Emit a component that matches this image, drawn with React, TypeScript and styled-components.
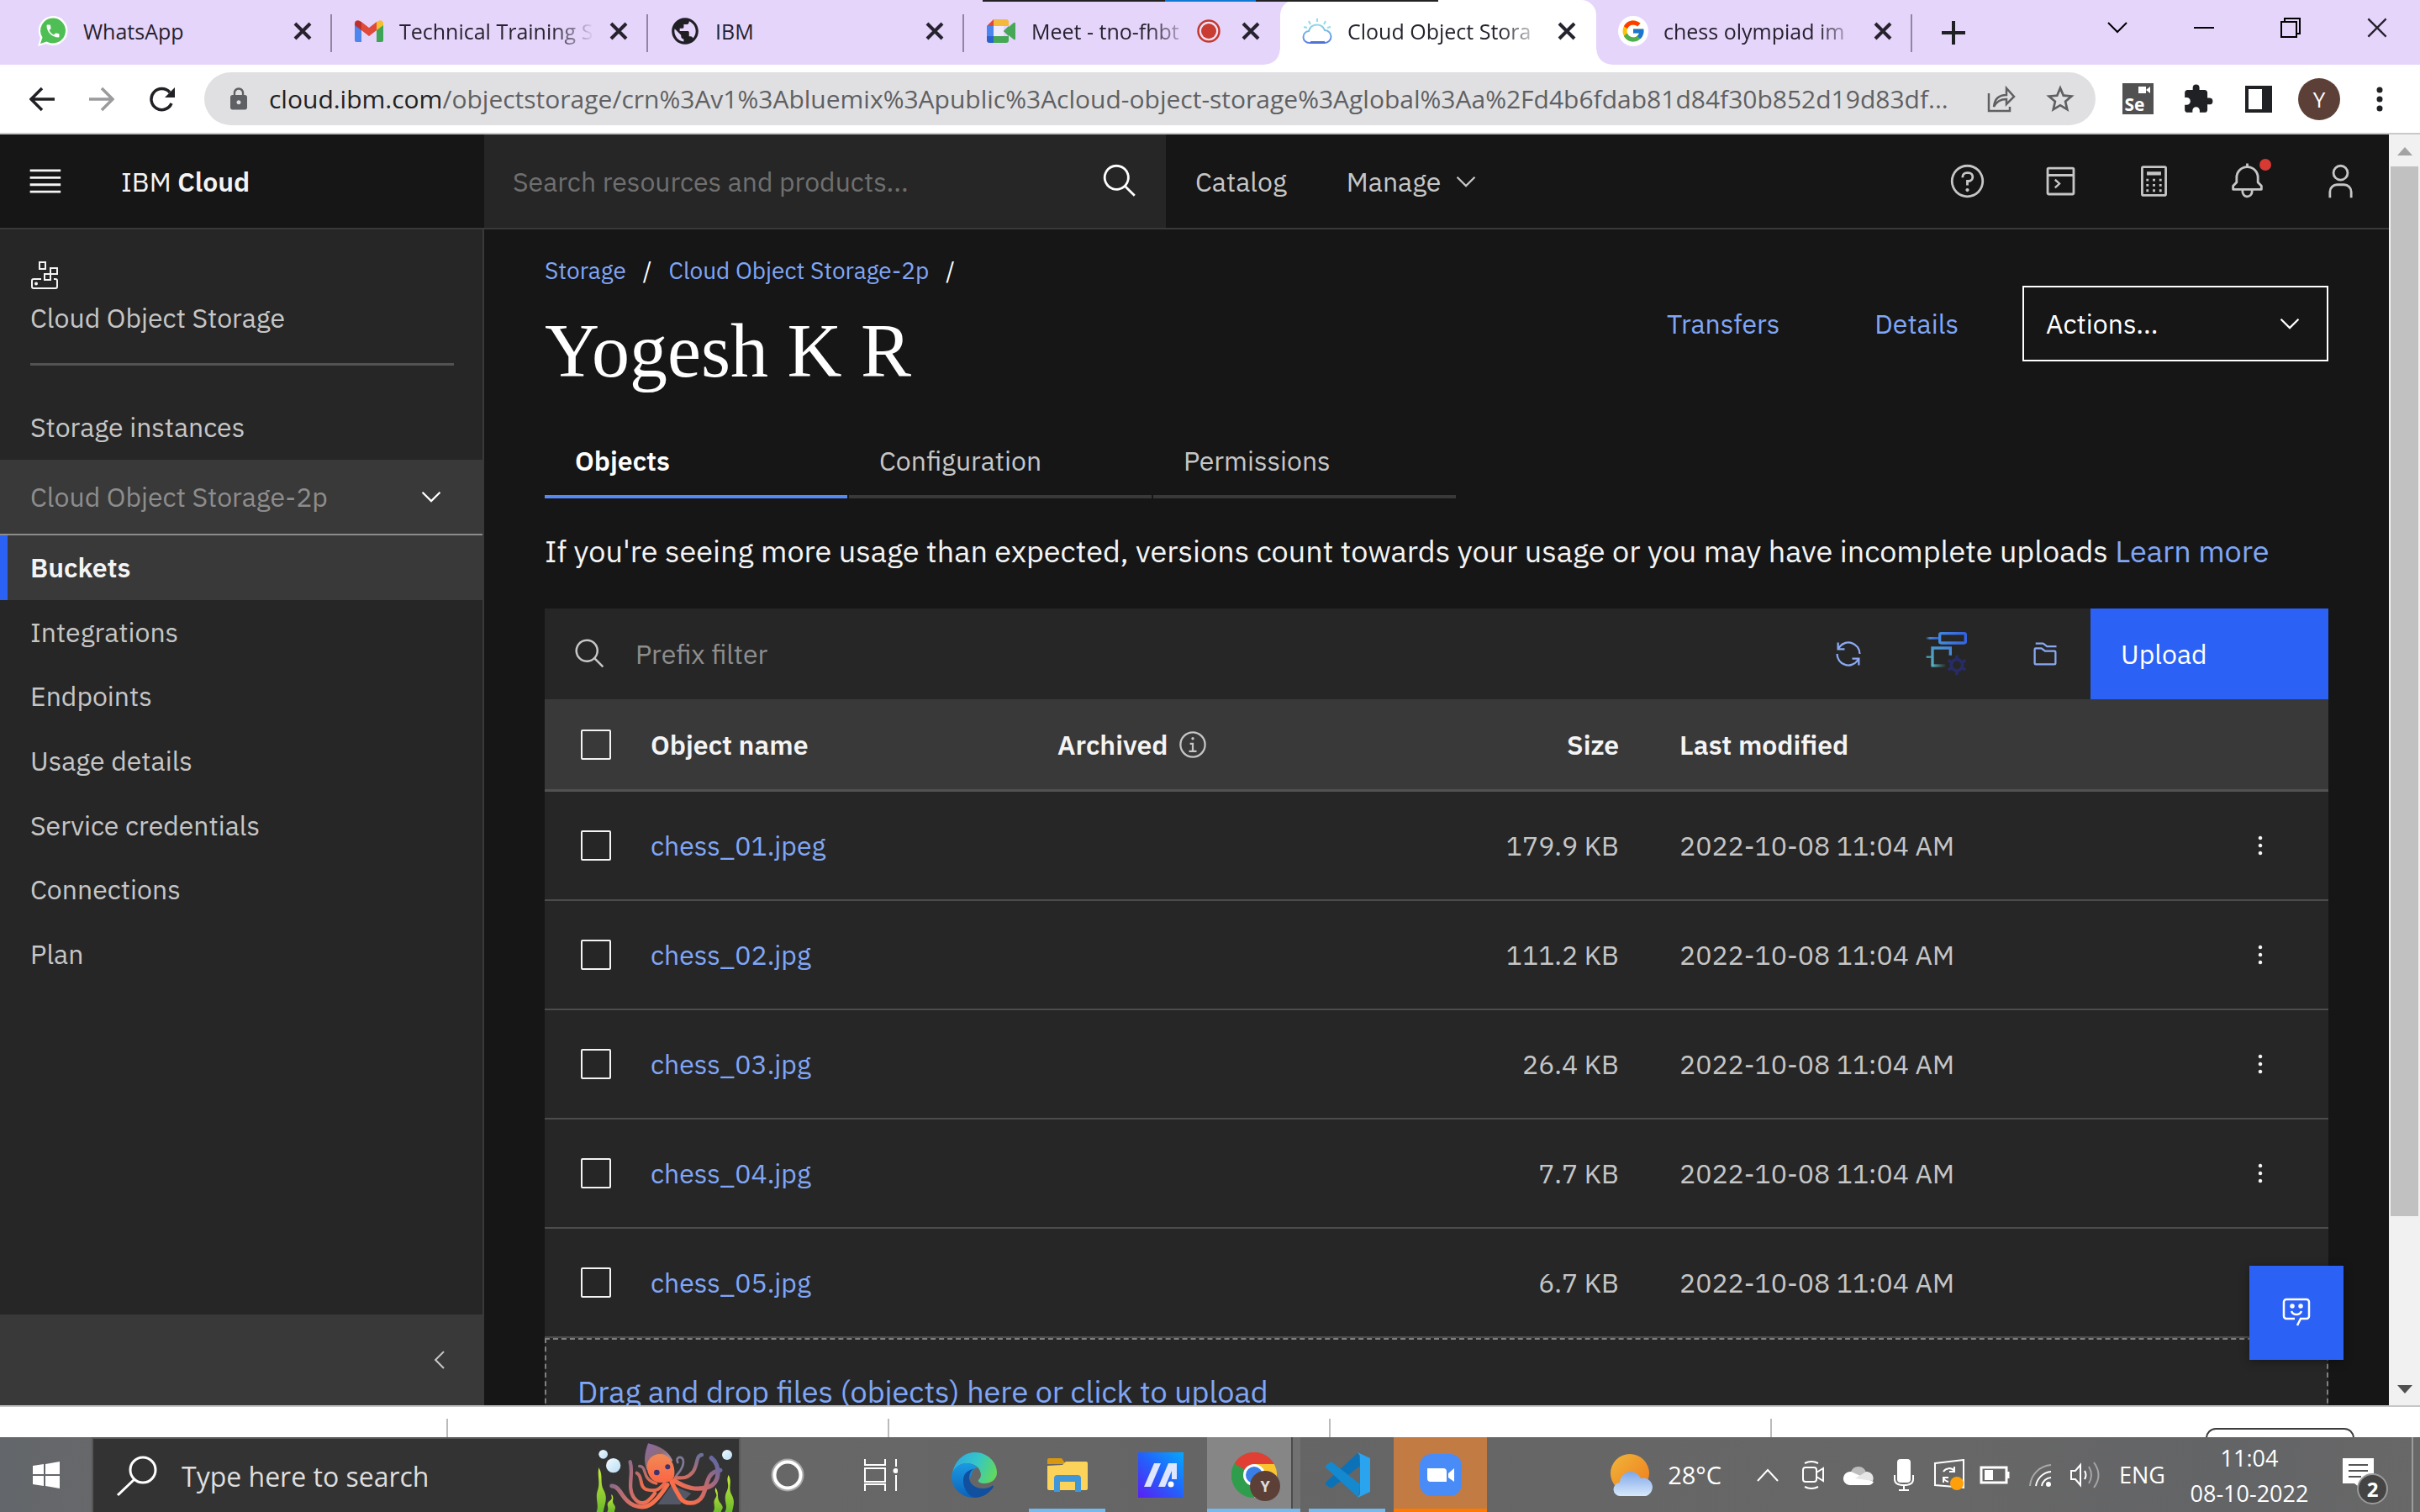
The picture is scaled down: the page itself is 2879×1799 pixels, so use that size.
import React from 'react';
import styled, { createGlobalStyle, css } from 'styled-components';
import { MdPublic, MdExtension, MdLock, MdStarBorder, MdPhone } from 'react-icons/md';
import { FcGoogle } from 'react-icons/fc';

const plex = `"IBM Plex Sans", Roboto, "Liberation Sans", sans-serif`;
const segoe = `"Segoe UI", "Open Sans", "Noto Sans", sans-serif`;

const c = {
  bg: '#161616',
  layer: '#262626',
  layer2: '#393939',
  line: '#4c4c4c',
  text: '#f4f4f4',
  text2: '#c6c6c6',
  muted: '#8d8d8d',
  link: '#80a6f6',
  blue: '#2c61f5',
};

const Global = createGlobalStyle`
  *, *::before, *::after { box-sizing: border-box; }
  body { margin: 0; background: #fff; overflow: hidden; }
  button, input, select { font: inherit; color: inherit; margin: 0; border: 0; padding: 0; background: none; outline: none; border-radius: 0; }
  a { color: inherit; text-decoration: none; }
  b { font-weight: 600; }
  svg { display: block; flex: none; }
  ul, ol { list-style: none; margin: 0; padding: 0; }
`;

const Screen = styled.div`
  height: 100vh;
  display: flex;
  flex-direction: column;
  overflow: hidden;
`;

/* ---------- Browser chrome ---------- */

const TabStrip = styled.div`
  position: relative;
  flex: none;
  display: flex;
  height: 77px;
  padding-left: 19px;
  background: #e5d5fb;
  color: #26222e;
  font: 25px/36px ${segoe};
`;
const ShareLine = styled.div`
  position: absolute;
  top: 0;
  left: 1169px;
  z-index: 2;
  display: flex;
  justify-content: center;
  width: 542px;
  height: 2px;
  background: #222;
  &::after { content: ''; width: 108px; background: #0f78d4; }
`;
const TabItem = styled.div<{ $active?: boolean; $divider?: boolean }>`
  position: relative;
  flex: none;
  display: flex;
  align-items: center;
  width: 376px;
  height: 77px;
  padding: 0 24px 3px 26px;
  ${p => p.$divider && css`
    &::after { content: ''; position: absolute; right: 0; top: 17px; width: 2px; height: 45px; background: #91869f; }
  `}
  ${p => p.$active && css`
    background: #fff;
    border-radius: 18px 18px 0 0;
    &::before, &::after {
      content: ''; position: absolute; bottom: 0; width: 18px; height: 18px;
    }
    &::before { left: -18px; background: radial-gradient(circle at 0 0, transparent 17px, #fff 18px); }
    &::after { right: -18px; background: radial-gradient(circle at 100% 0, transparent 17px, #fff 18px); }
  `}
`;
const Favicon = styled.span`
  display: flex;
  justify-content: center;
  flex: none;
  width: 36px;
  margin-right: 18px;
`;
const TabTitle = styled.span<{ $fade?: boolean }>`
  flex: 1;
  min-width: 0;
  white-space: nowrap;
  ${p => p.$fade && css`mask-image: linear-gradient(90deg, #000 calc(100% - 50px), transparent);`}
`;
const PlainButton = styled.button`
  display: flex;
  align-items: center;
  justify-content: center;
  flex: none;
`;
const Recording = styled.span`
  margin: 0 7px;
`;
const TabClose = styled(PlainButton)`
  width: 22px;
  height: 36px;
  margin-left: 18px;
`;
const NewTab = styled(PlainButton)`
  width: 98px;
`;
const WindowButtons = styled.div`
  display: flex;
  margin-left: auto;
  height: 66px;
`;
const WindowButton = styled(PlainButton)`
  width: 103px;
`;

const AddressRow = styled.div`
  flex: none;
  display: flex;
  align-items: center;
  height: 83px;
  border-bottom: 2px solid #c9c9c9;
  background: #fff;
  color: #202124;
`;
const NavButtons = styled.div`
  display: flex;
  padding: 0 16px 0 14px;
`;
const NavButton = styled(PlainButton)`
  width: 71px;
  height: 63px;
`;
const Omnibox = styled.label`
  flex: 1;
  min-width: 0;
  display: flex;
  align-items: center;
  height: 63px;
  padding: 0 22px 0 26px;
  border-radius: 32px;
  background: #e0e0e2;
  color: #5f6063;
  font: 30px/44px ${segoe};
`;
const Host = styled.span`
  margin-left: 21px;
  color: #202124;
`;
const UrlInput = styled.input`
  flex: 1;
  min-width: 0;
`;
const OmniButton = styled(PlainButton)`
  width: 40px;
  margin-left: 30px;
`;
const Extensions = styled.div`
  display: flex;
  align-items: center;
  padding: 0 12px 0 14px;
`;
const ExtButton = styled(PlainButton)`
  width: 72px;
  height: 63px;
`;
const SeBadge = styled.span`
  display: flex;
  flex-direction: column;
  align-items: flex-start;
  justify-content: flex-end;
  position: relative;
  width: 37px;
  height: 37px;
  padding-left: 3px;
  background: #515151;
  color: #fff;
  font: 700 21px/23px ${segoe};
`;
const SeCamera = styled.svg`
  position: absolute;
  top: 4px;
  right: 4px;
`;
const Avatar = styled.span`
  display: grid;
  place-items: center;
  width: 50px;
  height: 50px;
  border-radius: 50%;
  background: #5c4037;
  color: #fff;
  font: 26px/30px ${segoe};
`;

/* ---------- Web page ---------- */

const Viewport = styled.div`
  flex: 1;
  min-height: 0;
  display: flex;
  border-bottom: 2px solid #c6c6c6;
`;
const Page = styled.div`
  flex: 1;
  min-width: 0;
  display: flex;
  flex-direction: column;
  background: ${c.bg};
  color: ${c.text2};
  font: 32px/44px ${plex};
`;
const Scrollbar = styled.div`
  flex: none;
  display: flex;
  flex-direction: column;
  align-items: center;
  width: 37px;
  padding: 15px 2px 14px;
  background: #f1f1f1;
`;
const Thumb = styled.div`
  width: 33px;
  height: 1249px;
  margin: 13px 0 auto;
  background: #c1c1c1;
`;

const Header = styled.header`
  flex: none;
  display: flex;
  height: 113px;
  border-bottom: 2px solid ${c.layer2};
`;
const Brand = styled.div`
  display: flex;
  align-items: center;
  gap: 69px;
  width: 576px;
  padding-left: 30px;
  color: ${c.text};
`;
const HeaderSearch = styled.label`
  display: flex;
  align-items: center;
  justify-content: space-between;
  width: 811px;
  padding: 0 32px 0 34px;
  background: ${c.layer};
  color: #fff;
`;
const TextInput = styled.input<{ $ph: string }>`
  flex: 1;
  min-width: 0;
  &::placeholder { color: ${p => p.$ph}; opacity: 1; }
`;
const HeaderNav = styled.nav`
  display: flex;
  align-items: center;
  gap: 71px;
  padding-left: 35px;
`;
const MenuButton = styled(PlainButton)`
  gap: 12px;
`;
const HeaderIcons = styled.div`
  display: flex;
  margin-left: auto;
  padding-right: 2px;
`;
const HeaderIcon = styled(PlainButton)`
  position: relative;
  width: 111px;
`;
const AlertDot = styled.span`
  position: absolute;
  top: 29px;
  right: 27px;
  width: 14px;
  height: 14px;
  border-radius: 50%;
  background: #d63a33;
`;

const Body = styled.div`
  flex: 1;
  min-height: 0;
  display: flex;
`;
const Sidebar = styled.aside`
  flex: none;
  display: flex;
  flex-direction: column;
  width: 576px;
  border-right: 2px solid ${c.layer2};
  background: ${c.layer};
`;
const Service = styled.div`
  display: flex;
  flex-direction: column;
  gap: 12px;
  margin: 0 34px 0 36px;
  padding: 37px 0 32px;
  border-bottom: 3px solid #525252;
`;
const SideHeading = styled.div`
  padding: 51px 36px 17px;
`;
const Instance = styled.label`
  position: relative;
  display: flex;
  align-items: center;
  height: 90px;
  padding: 0 43px 0 36px;
  border-bottom: 2px solid ${c.muted};
  background: ${c.layer2};
  color: #fff;
`;
const Select = styled.select`
  flex: 1;
  min-width: 0;
  appearance: none;
`;
const InstanceSelect = styled(Select)`
  color: ${c.muted};
`;
const SideList = styled.ul`
  display: grid;
  grid-auto-rows: 1fr;
  height: 536px;
`;
const SideLink = styled.a<{ $active?: boolean }>`
  display: flex;
  align-items: center;
  height: 100%;
  padding-left: 36px;
  ${p => p.$active && css`
    background: ${c.layer2};
    box-shadow: inset 9px 0 ${c.blue};
    color: ${c.text};
    font-weight: 600;
  `}
`;
const Collapse = styled.button`
  display: flex;
  align-items: center;
  justify-content: flex-end;
  height: 108px;
  margin-top: auto;
  padding-right: 34px;
  background: ${c.layer2};
  color: ${c.text2};
`;

const Main = styled.main`
  flex: 1;
  min-width: 0;
  padding: 27px 72px 0;
  overflow: hidden;
`;
const TitleRow = styled.div`
  display: flex;
  justify-content: space-between;
`;
const Crumbs = styled.ol`
  display: flex;
  gap: 20px;
  color: #fff;
  font-size: 28px;
`;
const Link = styled.a`
  color: ${c.link};
`;
const Title = styled.h1`
  margin: 22px 0 0;
  color: #fff;
  font: 90px/104px "Liberation Serif", serif;
`;
const PageActions = styled.div`
  display: flex;
  align-items: center;
  gap: 113px;
  height: 90px;
  margin-top: 40px;
`;
const ActionSelect = styled.label`
  display: flex;
  align-items: center;
  width: 364px;
  height: 90px;
  margin-left: -37px;
  padding: 0 26px;
  border: 2px solid #fff;
  color: #fff;
`;
const Tabs = styled.div`
  display: flex;
  gap: 2px;
  margin-top: 37px;
`;
const Tab = styled.button<{ $active?: boolean }>`
  width: 360px;
  height: 86px;
  padding: 0 36px;
  border-bottom: 4px solid ${p => (p.$active ? '#5589f4' : c.layer2)};
  color: ${p => (p.$active ? '#fff' : c.text2)};
  font-weight: ${p => (p.$active ? 600 : 400)};
  text-align: left;
`;
const Notice = styled.p`
  margin: 39px 0 44px;
  color: ${c.text};
  font-size: 36px;
  line-height: 48px;
  white-space: nowrap;
`;
const Toolbar = styled.div`
  display: flex;
  align-items: center;
  height: 108px;
  background: ${c.layer};
`;
const FilterBox = styled.label`
  flex: 1;
  display: flex;
  align-items: center;
  gap: 34px;
  padding-left: 34px;
`;
const ToolButtons = styled.div`
  display: flex;
  gap: 9px;
  color: #8aa9f2;
`;
const ToolButton = styled(PlainButton)`
  width: 108px;
  height: 108px;
`;
const Upload = styled.button`
  width: 283px;
  height: 108px;
  padding-left: 36px;
  background: ${c.blue};
  color: #fff;
  text-align: left;
`;

const Table = styled.table`
  width: 100%;
  table-layout: fixed;
  border-collapse: separate;
  border-spacing: 0;
`;
const Col = styled.col<{ $w: string }>`
  width: ${p => p.$w};
`;
const Th = styled.th<{ $right?: boolean }>`
  height: 110px;
  padding: 0 36px;
  border-bottom: 3px solid #525252;
  background: ${c.layer2};
  color: ${c.text};
  font-weight: 600;
  text-align: ${p => (p.$right ? 'right' : 'left')};
`;
const Td = styled.td<{ $right?: boolean }>`
  height: 130px;
  padding: 0 36px;
  border-bottom: 2px solid ${c.line};
  background: ${c.layer};
  text-align: ${p => (p.$right ? 'right' : 'left')};
`;
const Check = styled.input`
  display: block;
  appearance: none;
  width: 36px;
  height: 36px;
  margin-left: 7px;
  border: 2px solid #f4f4f4;
  border-radius: 2px;
  &:checked { background: #f4f4f4; }
`;
const HeadLabel = styled.span`
  display: flex;
  align-items: center;
  gap: 11px;
`;
const InfoIcon = styled.span`
  color: ${c.text2};
`;
const RowMenu = styled(PlainButton)`
  width: 90px;
  height: 90px;
  color: #f4f4f4;
`;
const DropZone = styled.button`
  display: flex;
  align-items: flex-start;
  width: 100%;
  height: 160px;
  padding: 40px 37px;
  border: 2px dashed #808080;
  background: ${c.layer};
  color: ${c.link};
  font-size: 36px;
  line-height: 44px;
`;
const Feedback = styled(PlainButton)`
  position: fixed;
  right: 91px;
  bottom: 181px;
  width: 112px;
  height: 112px;
  background: ${c.blue};
  color: #fff;
  box-shadow: 0 2px 10px rgba(0, 0, 0, 0.35);
`;

/* ---------- Downloads shelf and taskbar ---------- */

const Shelf = styled.div`
  flex: none;
  position: relative;
  display: flex;
  align-items: flex-end;
  height: 36px;
  padding-left: 8px;
  background: #fff;
  overflow: hidden;
`;
const ShelfItem = styled.div`
  width: 525px;
  height: 22px;
  border-right: 2px solid #bbb;
`;
const ShowAll = styled.button`
  align-self: flex-start;
  width: 177px;
  height: 50px;
  margin: 25px 78px 0 auto;
  border: 2px solid #3c3c3c;
  border-radius: 12px;
`;

const Taskbar = styled.footer`
  flex: none;
  display: flex;
  height: 89px;
  background: linear-gradient(90deg, #63666a 0, #6a6a6a 8%, #656565 50%, #676767 80%, #636466 92%, #686868 100%);
  color: #fff;
  font-family: ${segoe};
`;
const Start = styled(PlainButton)`
  width: 109px;
`;
const TaskSearch = styled.label`
  display: flex;
  align-items: center;
  width: 772px;
  padding-left: 27px;
  border: solid #585858;
  border-width: 2px 2px 0;
  background: #333;
  color: #fff;
  font-size: 32px;
`;
const TaskSearchInput = styled(TextInput)`
  height: 60px;
  margin-left: 28px;
  padding-top: 2px;
`;
const TaskApp = styled(PlainButton)<{ $bar?: string; $wide?: boolean; $bg?: string }>`
  position: relative;
  width: 111px;
  background: ${p => p.$bg ?? 'none'};
  ${p => p.$bar && css`
    &::after {
      content: ''; position: absolute; bottom: 0; height: 4px;
      left: ${p.$wide ? 0 : 10}px; right: ${p.$wide ? 0 : 10}px; background: ${p.$bar};
    }
  `}
`;
const Profile = styled.span`
  position: absolute;
  left: 51px;
  top: 40px;
  display: grid;
  place-items: center;
  width: 36px;
  height: 36px;
  border-radius: 50%;
  background: #5c4037;
  color: #ddd;
  font: 700 18px/20px ${segoe};
`;
const Tray = styled.div`
  display: flex;
  align-items: center;
  margin-left: auto;
`;
const Weather = styled(PlainButton)`
  gap: 18px;
  padding-right: 28px;
  height: 89px;
  font-size: 29px;
`;
const TrayIcon = styled(PlainButton)`
  width: 54px;
  height: 89px;
`;
const Language = styled(PlainButton)`
  width: 81px;
  font-size: 27px;
`;
const Clock = styled.div`
  width: 174px;
  padding-top: 3px;
  font-size: 27px;
  line-height: 42px;
  text-align: center;
`;
const Notifications = styled(PlainButton)`
  position: relative;
  width: 106px;
  height: 89px;
  padding-right: 20px;
`;
const Count = styled.span`
  position: absolute;
  left: 41px;
  top: 43px;
  display: grid;
  place-items: center;
  width: 37px;
  height: 37px;
  border: 2px solid #9a9a9a;
  border-radius: 50%;
  background: #444;
  font: 700 24px/28px ${segoe};
`;
const ShowDesktop = styled.button`
  width: 10px;
  height: 89px;
  border-left: 2px solid #9b9b9b;
`;

/* ---------- Icons ---------- */

const Glyph = ({ d, size = 45, box = 32 }: { d: string; size?: number; box?: number }) => (
  <svg width={size} height={size} viewBox={`0 0 ${box} ${box}`} fill="currentColor" aria-hidden="true"><path d={d} /></svg>
);
const G = {
  search: 'M29,27.5859l-7.5521-7.5521a11.0177,11.0177,0,1,0-1.4141,1.4141L27.5859,29ZM4,13a9,9,0,1,1,9,9A9.01,9.01,0,0,1,4,13Z',
  down: 'M8 11 3 6 3.7 5.3 8 9.6 12.3 5.3 13 6z',
  left: 'M5 8 10 3 10.7 3.7 6.4 8 10.7 12.3 10 13z',
  renew: 'M12 10H6.78A11 11 0 0 1 27 16h2A13 13 0 0 0 6 7.68V4H4v8h8zM20 22h5.22A11 11 0 0 1 5 16H3a13 13 0 0 0 23 8.32V28h2v-8h-8z',
  folders: 'M26,28H6a2,2,0,0,1-2-2V11A2,2,0,0,1,6,9h5.67a2,2,0,0,1,1.2.4l3.46,2.6H26a2,2,0,0,1,2,2V26A2,2,0,0,1,26,28ZM11.67,11H6L6,26H26V14H15.67ZM28,9H17.67l-4-3H6V4h7.67a2,2,0,0,1,1.2.4L18.33,7H28Z',
  help: 'M16 2a14 14 0 1 0 14 14A14 14 0 0 0 16 2Zm0 26a12 12 0 1 1 12-12A12 12 0 0 1 16 28ZM16 22a1.5 1.5 0 1 0 .01 0ZM17 8H15.5A4.49 4.49 0 0 0 11 12.5V13h2v-.5A2.5 2.5 0 0 1 15.5 10H17a2.5 2.5 0 0 1 0 5H15v4.5h2V17a4.5 4.5 0 0 0 0-9Z',
  info: 'M16 2a14 14 0 1 0 14 14A14 14 0 0 0 16 2Zm0 26a12 12 0 1 1 12-12A12 12 0 0 1 16 28ZM17 22V14H13v2h2v6H12v2h8V22zM16 8a1.5 1.5 0 1 0 1.5 1.5A1.5 1.5 0 0 0 16 8z',
  bell: 'M28.7071,19.293,26,16.5859V13a10.0136,10.0136,0,0,0-9-9.9492V1H15V3.0508A10.0136,10.0136,0,0,0,6,13v3.5859L3.2929,19.293A1,1,0,0,0,3,20v3a1,1,0,0,0,1,1h7v.7768a5.152,5.152,0,0,0,4.5,5.1987A5.0057,5.0057,0,0,0,21,25V24h7a1,1,0,0,0,1-1V20A1,1,0,0,0,28.7071,19.293ZM19,25a3,3,0,0,1-6,0V24h6Zm8-3H5V20.4141L7.707,17.707A1,1,0,0,0,8,17V13a8,8,0,0,1,16,0v4a1,1,0,0,0,.293.707L27,20.4141Z',
  user: 'M16 4a5 5 0 1 1-5 5 5 5 0 0 1 5-5m0-2a7 7 0 1 0 7 7A7 7 0 0 0 16 2ZM26 30H24V25a5 5 0 0 0-5-5H13a5 5 0 0 0-5 5v5H6V25a7 7 0 0 1 7-7h6a7 7 0 0 1 7 7Z',
  shell: 'M26 4H6a2 2 0 0 0-2 2V26a2 2 0 0 0 2 2H26a2 2 0 0 0 2-2V6a2 2 0 0 0-2-2Zm0 2v4H6V6ZM6 26V12H26V26ZM11.8 22.2 10.6 21 13.8 18.2 10.6 15.4 11.8 14 16.2 18.2Z',
  calc: 'M25 3H7A2 2 0 0 0 5 5V27a2 2 0 0 0 2 2H25a2 2 0 0 0 2-2V5a2 2 0 0 0-2-2Zm0 24H7V5H25ZM10 8H22V11H10ZM9.5 14h2v2h-2ZM15 14h2v2h-2ZM20.5 14h2v2h-2ZM9.5 18.5h2v2h-2ZM15 18.5h2v2h-2ZM20.5 18.5h2v2h-2ZM9.5 23h2v2h-2ZM15 23h2v2h-2ZM20.5 23h2v2h-2Z',
  kebab: 'M16 6a2 2 0 1 0 .01 0ZM16 14a2 2 0 1 0 .01 0ZM16 22a2 2 0 1 0 .01 0Z',
  menu: 'M4 6h26v2H4ZM4 12h26v2H4ZM4 18h26v2H4ZM4 24h26v2H4Z',
};

const CloseX = ({ size = 22, w = 4 }: { size?: number; w?: number }) => (
  <svg width={size} height={size} viewBox="0 0 22 22" stroke="currentColor" strokeWidth={w}><path d="M2 2 20 20M20 2 2 20" /></svg>
);
const WhatsApp = () => (
  <svg width="36" height="36" viewBox="0 0 36 36">
    <path d="M18 0A17.500 17.500 0 0 1 18 35 17 17 0 0 1 10 33L0 36 3 26A17.500 17.500 0 0 1 18 0Z" fill="#fff" />
    <path d="M18 2.500A15 15 0 0 1 18 32.500 15 15 0 0 1 10.500 30.500L3 33 5.500 25.500A15 15 0 0 1 18 2.500Z" fill="#4fbf55" />
    <MdPhone x="8" y="8" size={20} color="#fff" />
  </svg>
);
const Gmail = () => (
  <svg width="34" height="26" viewBox="0 0 34 26">
    <path d="M0 5V24a2 2 0 0 0 2 2H8V11Z" fill="#4a86ee" />
    <path d="M34 5V24a2 2 0 0 1-2 2H26V11Z" fill="#3fa556" />
    <path d="M8 2 17 9 26 2V12L17 19 8 12Z" fill="#e04a3a" />
    <path d="M8 2 5 .5A3.500 3.500 0 0 0 0 3.500V6L8 12Z" fill="#c0302b" />
    <path d="M26 2 29 .5A3.500 3.500 0 0 1 34 3.500V6L26 12Z" fill="#f5bf30" />
  </svg>
);
const MeetIcon = () => (
  <svg width="34" height="28" viewBox="0 0 34 28">
    <path d="M8 0H23a3 3 0 0 1 3 3V8H8Z" fill="#f4b93a" />
    <path d="M8 0V8H0Z" fill="#e2453a" />
    <path d="M0 8H8V20H0Z" fill="#4a86ee" />
    <path d="M0 20H8V28H3a3 3 0 0 1-3-3Z" fill="#2c62d0" />
    <path d="M8 20H26V25a3 3 0 0 1-3 3H8Z" fill="#46a856" />
    <path d="M20 14 26 8V20Z" fill="#3c9650" />
    <path d="M20 14 32 4q2-1 2 1V23q0 2-2 1Z" fill="#46a856" />
    <path d="M8 8H20V20H8Z" fill="#eee9fb" />
  </svg>
);
const CloudSun = () => (
  <svg width="36" height="32" viewBox="0 0 36 32" fill="none">
    <defs><linearGradient id="cs" x1="0" y1="0" x2="0" y2="1"><stop offset="0" stopColor="#8ad8e8" /><stop offset="1" stopColor="#5b7fe0" /></linearGradient></defs>
    <path d="M9 30a7 7 0 0 1-1-14 10 10 0 0 1 19-1 7.500 7.500 0 0 1 0 15Z" stroke="url(#cs)" strokeWidth="2" />
    <path d="M18 1V5M8 4 10 8M28 4 26 8M2 11 6 12M34 11 30 12" stroke="#90dcea" strokeWidth="2" />
    <path d="M10 29.500H27" stroke="#4f72d8" strokeWidth="3" />
  </svg>
);
const Record = () => (
  <svg width="28" height="28" viewBox="0 0 28 28"><circle cx="14" cy="14" r="12.500" fill="#efe3fa" stroke="#c4392e" strokeWidth="2.500" /><circle cx="14" cy="14" r="9" fill="#c93c31" /></svg>
);
const Arrow = ({ flip, color }: { flip?: boolean; color: string }) => (
  <svg width="30" height="30" viewBox="0 0 30 30" fill="none" stroke={color} strokeWidth="3.500">
    <path d={flip ? 'M0 15H28M15 2 28 15 15 28' : 'M30 15H2M15 2 2 15 15 28'} />
  </svg>
);
const Reload = () => (
  <svg width="34" height="30" viewBox="0 0 34 30"><path d="M29 20A12.500 12.500 0 1 1 27 7" fill="none" stroke="#202124" strokeWidth="3.500" /><path d="M33 1V13H21Z" fill="#202124" /></svg>
);
const Share = () => (
  <svg width="34" height="32" viewBox="0 0 34 32" fill="none" stroke="#5f6063" strokeWidth="2.500">
    <path d="M2 9V30H27V25" /><path d="M8 25C9 15 14 11 23 11V3L32 13 23 22V16C16 16 11 19 8 25Z" />
  </svg>
);
const WindowsLogo = () => (
  <svg width="34" height="34" viewBox="0 0 34 34" fill="#fff"><path d="M1 6 14 4V16H1ZM16 4 33 1V16H16ZM1 18H14V30L1 28ZM16 18H33V33L16 30Z" /></svg>
);
const StorageIcon = () => (
  <svg width="34" height="34" viewBox="0 0 34 34" fill="none" stroke="#f4f4f4" strokeWidth="2">
    <path d="M11 2H18V10H11ZM24 9H32V16H24ZM17 16H24V23H17Z" />
    <path d="M13 22H4a2 2 0 0 0-2 2V31a2 2 0 0 0 2 2H30a2 2 0 0 0 2-2V24a2 2 0 0 0-2-2H28" /><circle cx="7" cy="27.500" r="1" />
  </svg>
);
const MigrateIcon = () => (
  <svg width="50" height="54" viewBox="0 0 150 162" fill="none">
    <defs>
      <linearGradient id="mg1" x1="0" x2="1"><stop offset="0" stopColor="#4b93d0" stopOpacity="0" /><stop offset=".3" stopColor="#4488dd" /><stop offset="1" stopColor="#2f5fe0" /></linearGradient>
      <linearGradient id="mg2" gradientUnits="userSpaceOnUse" x1="10" y1="130" x2="90" y2="60"><stop offset="0" stopColor="#55b0bb" /><stop offset="1" stopColor="#4585da" /></linearGradient>
      <linearGradient id="mg3" gradientUnits="userSpaceOnUse" x1="22" y1="0" x2="74" y2="0"><stop offset="0" stopColor="#55b0bb" /><stop offset="1" stopColor="#55b0bb" stopOpacity="0" /></linearGradient>
      <linearGradient id="mg4" gradientUnits="userSpaceOnUse" x1="46" y1="42" x2="146" y2="8"><stop offset="0" stopColor="#468cdc" /><stop offset="1" stopColor="#3260e4" /></linearGradient>
    </defs>
    <path d="M0 21H48V29H0Z" fill="url(#mg1)" />
    <rect x="50" y="8" width="92" height="34" rx="5" stroke="url(#mg4)" strokeWidth="10" />
    <path d="M88 86V60H24V124" stroke="url(#mg2)" strokeWidth="10" />
    <path d="M20 118H76V128H20Z" fill="url(#mg3)" />
    <path d="M2 92H22" stroke="#4a9fae" strokeWidth="7" />
    <circle cx="111" cy="121" r="20" stroke="#272c66" strokeWidth="11" />
    <path d="M111 86V98M111 144V156M80 104 92 111M142 104 130 111M80 138 92 131M142 138 130 131" stroke="#272c66" strokeWidth="11" />
  </svg>
);
const Smile = () => (
  <svg width="34" height="36" viewBox="0 0 34 36" fill="none" stroke="currentColor" strokeWidth="2.500">
    <path d="M15 25H5a3 3 0 0 1-3-3V5a3 3 0 0 1 3-3H29a3 3 0 0 1 3 3V22a3 3 0 0 1-3 3H22L18 33" />
    <path d="M11 16a6.500 6.500 0 0 0 12 0" /><circle cx="12" cy="10" r="1.500" /><circle cx="22" cy="10" r="1.500" />
  </svg>
);
const Octopus = () => (
  <svg width="180" height="87" viewBox="0 6 540 261" fill="none" strokeLinecap="round">
    <defs>
      <linearGradient id="oc1" x1="0" y1="0" x2="1" y2="1"><stop offset="0" stopColor="#8b6aa8" /><stop offset=".45" stopColor="#8d6c78" /><stop offset="1" stopColor="#b9a9c9" /></linearGradient>
      <linearGradient id="oc2" x1="0" y1="0" x2="0" y2="1"><stop offset="0" stopColor="#f08a55" /><stop offset="1" stopColor="#fb6545" /></linearGradient>
      <linearGradient id="ocL" gradientUnits="userSpaceOnUse" x1="80" y1="120" x2="230" y2="230"><stop offset="0" stopColor="#6f6a94" /><stop offset=".5" stopColor="#c06d72" /><stop offset="1" stopColor="#f8704c" /></linearGradient>
      <linearGradient id="ocR" gradientUnits="userSpaceOnUse" x1="470" y1="90" x2="330" y2="200"><stop offset="0" stopColor="#5e68a4" /><stop offset=".5" stopColor="#c0696f" /><stop offset="1" stopColor="#fa6f4a" /></linearGradient>
      <linearGradient id="ocU" gradientUnits="userSpaceOnUse" x1="0" y1="60" x2="0" y2="170"><stop offset="0" stopColor="#66709c" /><stop offset="1" stopColor="#ee6c4e" /></linearGradient>
      <linearGradient id="weed" x1="0" y1="0" x2="0" y2="1"><stop offset="0" stopColor="#c6ec3a" /><stop offset="1" stopColor="#6cb92c" /></linearGradient>
      <linearGradient id="bub" x1="0" y1="0" x2="1" y2="1"><stop offset="0" stopColor="#f2fbff" /><stop offset="1" stopColor="#b9ddf5" /></linearGradient>
    </defs>
    <path d="M250 240 300 170 370 200 330 240Z" fill="#545866" />
    <path d="M152 88C165 130 140 180 165 215S215 235 240 200" stroke="url(#ocL)" strokeWidth="13" />
    <path d="M86 174C120 175 120 225 165 243S240 240 285 170" stroke="url(#ocL)" strokeWidth="15" />
    <path d="M185 103C215 105 190 150 245 165" stroke="url(#ocU)" strokeWidth="10" />
    <path d="M176 128C200 140 180 180 215 188S260 180 275 165" stroke="url(#ocU)" strokeWidth="12" />
    <path d="M322 90C310 70 342 62 342 88S325 125 315 140" stroke="#7f7a95" strokeWidth="8" />
    <path d="M408 63C385 65 395 100 375 125S335 145 315 145" stroke="url(#ocU)" strokeWidth="13" />
    <path d="M442 74C475 100 475 165 430 178S350 180 310 155" stroke="url(#ocR)" strokeWidth="16" />
    <path d="M474 118C420 125 430 175 410 210S345 240 330 215 310 180 300 160" stroke="url(#ocR)" strokeWidth="15" />
    <path d="M216 22C202 60 200 90 212 118L304 84C290 50 255 30 216 22Z" fill="url(#oc1)" />
    <path d="M212 110C208 80 235 58 262 60S308 88 310 120 300 160 270 162 218 150 212 110Z" fill="url(#oc2)" />
    <circle cx="247" cy="126" r="10" fill="#3e3270" /><circle cx="286" cy="106" r="9" fill="#3e3270" />
    <circle cx="56" cy="61" r="16" fill="url(#bub)" /><circle cx="92" cy="101" r="26" fill="url(#bub)" /><circle cx="498" cy="63" r="18" fill="url(#bub)" />
    <path d="M40 108C58 140 42 160 58 190S60 240 56 267H32C42 240 26 220 36 190S34 140 40 108Z" fill="url(#weed)" />
    <path d="M86 204C98 220 84 226 94 240S96 256 96 267H70C80 250 62 240 78 228S82 214 86 204Z" fill="url(#weed)" />
    <path d="M457 180C472 200 458 215 474 235S478 256 476 267H448C460 250 444 235 456 218S450 200 457 180Z" fill="url(#weed)" />
    <path d="M503 135C518 160 500 180 514 205S520 245 516 267H490C504 245 482 225 496 195S492 160 503 135Z" fill="url(#weed)" />
  </svg>
);
const TaskView = () => (
  <svg width="40" height="40" viewBox="0 0 40 40" fill="none" stroke="#fff" strokeWidth="2"><path d="M1 1V8H25V1M1 12H25V28H1ZM1 39V31H25V39M38 1V10M38 20V39" /><circle cx="37.500" cy="15" r="2" fill="#fff" /></svg>
);
const Edge = () => (
  <svg width="54" height="54" viewBox="0 0 54 54">
    <defs>
      <linearGradient id="ed1" x1="0" y1=".3" x2="1" y2=".6"><stop offset="0" stopColor="#2fa8e0" /><stop offset=".5" stopColor="#34c6c9" /><stop offset="1" stopColor="#62d95c" /></linearGradient>
      <linearGradient id="ed2" x1="0" y1="0" x2="0" y2="1"><stop offset="0" stopColor="#1a9ae2" /><stop offset="1" stopColor="#0c62bb" /></linearGradient>
    </defs>
    <path d="M1 26C3 10 15 0 28 0 42 0 54 11 54 24 54 33 46 37 39 37 34 37 31 35 32 33 34 31 35 29 35 26 34 18 27 13 18 13 9 13 3 19 1 26Z" fill="url(#ed1)" />
    <path d="M18 13C9 13 0 20 0 29 0 43 12 54 27 54L29 44 21 34 26 20 31 18C28 15 23 13 18 13Z" fill="url(#ed2)" />
    <path d="M14 33C14 45 22 54 29 54 40 53 47 46 50 41 50 40 49 39 48 40 45 42 42 43 37 43 28 43 21 37 21 30 21 26 23 22 26 20 19 21 14 26 14 33Z" fill="#10509f" />
  </svg>
);
const Explorer = () => (
  <svg width="48" height="40" viewBox="0 0 48 40"><path d="M0 2A2 2 0 0 1 2 0H17L22 7H0Z" fill="#d9960f" /><path d="M0 9 18 8 22 4H46A2 2 0 0 1 48 6V36A2 2 0 0 1 46 38H2A2 2 0 0 1 0 36Z" fill="#fbd25a" /><path d="M8 40V24A4 4 0 0 1 12 20H36A4 4 0 0 1 40 24V40H33V28H15V40Z" fill="#3f97d8" /></svg>
);
const MyAsus = () => (
  <svg width="54" height="54" viewBox="0 0 54 54">
    <defs><linearGradient id="ma" x1="0" y1="1" x2="1" y2="0"><stop offset="0" stopColor="#5a1ef5" /><stop offset=".5" stopColor="#2460fa" /><stop offset="1" stopColor="#05a8fb" /></linearGradient></defs>
    <path d="M0 0H54V54H0Z" fill="url(#ma)" /><path d="M7 41 19 13H27L15 41ZM24 41 36 13H46V32H40V22L32 41Z" fill="#dfe6ff" /><circle cx="39" cy="38" r="3.500" fill="#fff" />
  </svg>
);
const Chrome = () => (
  <svg width="54" height="54" viewBox="0 0 54 54"><circle cx="27" cy="27" r="27" fill="#2f9e4c" /><path d="M27 27 3.500 13.500A27 27 0 0 1 50.500 13.500H27Z" fill="#e13f33" /><path d="M27 14H50.800A27 27 0 0 1 27 54L39 33Z" fill="#fbc530" /><path d="M3.500 13.500 15.500 34 27 40 33 40 25 54A27 27 0 0 1 3.500 13.500Z" fill="#2f9e4c" /><circle cx="27" cy="27" r="13" fill="#fff" /><circle cx="27" cy="27" r="10" fill="#3a7ee8" /></svg>
);
const VsCode = () => (
  <svg width="54" height="54" viewBox="0 0 54 54"><path d="M40 0 1 36V38L6 42H9L42 16Z" fill="#0b72b8" /><path d="M40 54 1 18V16L6 12H9L42 38Z" fill="#1489cf" /><path d="M39 0 54 7V47L39 54 42 50V4Z" fill="#2aa4ef" /></svg>
);
const Zoom = () => (
  <svg width="50" height="50" viewBox="0 0 50 50"><rect width="50" height="50" rx="14" fill="#4a8cf7" /><path d="M9 17H28A4 4 0 0 1 32 21V33H13A4 4 0 0 1 9 29ZM34 23 41 17V33L34 28Z" fill="#fff" /></svg>
);
const WeatherIcon = () => (
  <svg width="50" height="50" viewBox="0 0 50 50">
    <defs><linearGradient id="w1" x1="0" y1="0" x2="1" y2="1"><stop offset="0" stopColor="#f0b63a" /><stop offset="1" stopColor="#f07a1c" /></linearGradient><linearGradient id="w2" x1="0" y1="0" x2="0" y2="1"><stop offset="0" stopColor="#7ea8ea" /><stop offset="1" stopColor="#d9e8fb" /></linearGradient></defs>
    <circle cx="23" cy="23" r="23" fill="url(#w1)" /><path d="M12 50A8 8 0 0 1 11 34 13 13 0 0 1 36 29 10 10 0 0 1 42 50Z" fill="url(#w2)" />
  </svg>
);

const Line = ({ w = 40, h = 40, children }: { w?: number; h?: number; children: React.ReactNode }) => (
  <svg width={w} height={h} viewBox={`0 0 ${w} ${h}`} fill="none" stroke="#fff" strokeWidth="2">{children}</svg>
);

const tabs = [
  { title: 'WhatsApp', icon: <WhatsApp />, divider: true },
  { title: 'Technical Training S', icon: <Gmail />, fade: true, divider: true },
  { title: 'IBM', icon: <MdPublic size={38} color="#1f1f24" />, divider: true },
  { title: 'Meet - tno-fhbt', icon: <MeetIcon />, fade: true, rec: true },
  { title: 'Cloud Object Stora', icon: <CloudSun />, fade: true, active: true },
  { title: 'chess olympiad im', icon: <svg width="36" height="36" viewBox="0 0 36 36"><circle cx="18" cy="18" r="18" fill="#fff" /><FcGoogle x="3" y="3" size={30} /></svg>, fade: true, divider: true },
];

const files = [
  { name: 'chess_01.jpeg', size: '179.9 KB' },
  { name: 'chess_02.jpg', size: '111.2 KB' },
  { name: 'chess_03.jpg', size: '26.4 KB' },
  { name: 'chess_04.jpg', size: '7.7 KB' },
  { name: 'chess_05.jpg', size: '6.7 KB' },
];

const sideItems = ['Buckets', 'Integrations', 'Endpoints', 'Usage details', 'Service credentials', 'Connections', 'Plan'];

function BrowserChrome() {
  return (
    <>
      <TabStrip>
        <ShareLine />
        {tabs.map(t => (
          <TabItem key={t.title} $active={t.active} $divider={t.divider}>
            <Favicon>{t.icon}</Favicon>
            <TabTitle $fade={t.fade}>{t.title}</TabTitle>
            {t.rec && <Recording><Record /></Recording>}
            <TabClose aria-label={`Close ${t.title}`}><CloseX /></TabClose>
          </TabItem>
        ))}
        <NewTab aria-label="New tab"><svg width="28" height="28" viewBox="0 0 28 28" stroke="#202124" strokeWidth="4"><path d="M14 0V28M0 14H28" /></svg></NewTab>
        <WindowButtons>
          <WindowButton aria-label="Search tabs"><svg width="24" height="14" viewBox="0 0 24 14" fill="none" stroke="#000" strokeWidth="2"><path d="M1 1 12 12 23 1" /></svg></WindowButton>
          <WindowButton aria-label="Minimise"><svg width="24" height="2" viewBox="0 0 24 2"><path d="M0 0H24V2H0Z" /></svg></WindowButton>
          <WindowButton aria-label="Restore"><svg width="24" height="24" viewBox="0 0 24 24" fill="none" stroke="#000" strokeWidth="2"><path d="M1 5H19V23H1ZM5 5V1H23V19H19" /></svg></WindowButton>
          <WindowButton aria-label="Close window"><CloseX size={26} w={2} /></WindowButton>
        </WindowButtons>
      </TabStrip>
      <AddressRow>
        <NavButtons>
          <NavButton aria-label="Back"><Arrow color="#202124" /></NavButton>
          <NavButton aria-label="Forward"><Arrow flip color="#9b9b9d" /></NavButton>
          <NavButton aria-label="Reload"><Reload /></NavButton>
        </NavButtons>
        <Omnibox>
          <MdLock size={30} />
          <Host>cloud.ibm.com</Host>
          <UrlInput aria-label="Address" defaultValue="/objectstorage/crn%3Av1%3Abluemix%3Apublic%3Acloud-object-storage%3Aglobal%3Aa%2Fd4b6fdab81d84f30b852d19d83df..." />
          <OmniButton aria-label="Share"><Share /></OmniButton>
          <OmniButton aria-label="Bookmark"><MdStarBorder size={40} /></OmniButton>
        </Omnibox>
        <Extensions>
          <ExtButton aria-label="Selenium"><SeBadge>Se<SeCamera width="14" height="8" viewBox="0 0 14 8" fill="#fff"><path d="M0 0H9V8H0ZM9 4 14 0V8Z" /></SeCamera></SeBadge></ExtButton>
          <ExtButton aria-label="Extensions"><MdExtension size={38} /></ExtButton>
          <ExtButton aria-label="Side panel"><svg width="32" height="32" viewBox="0 0 32 32"><path d="M0 0H32V32H0Z" fill="#202124" /><path d="M4 4H20V28H4Z" fill="#fff" /></svg></ExtButton>
          <ExtButton aria-label="Profile"><Avatar>Y</Avatar></ExtButton>
          <ExtButton aria-label="Browser menu"><svg width="8" height="30" viewBox="0 0 8 30" fill="#202124"><circle cx="4" cy="4" r="3.500" /><circle cx="4" cy="15" r="3.500" /><circle cx="4" cy="26" r="3.500" /></svg></ExtButton>
        </Extensions>
      </AddressRow>
    </>
  );
}

function CloudHeader() {
  return (
    <Header>
      <Brand>
        <PlainButton aria-label="Menu"><Glyph d={G.menu} size={45} /></PlainButton>
        <span>IBM <b>Cloud</b></span>
      </Brand>
      <HeaderSearch>
        <TextInput $ph="#6f6f6f" placeholder="Search resources and products..." aria-label="Search resources and products" />
        <Glyph d={G.search} />
      </HeaderSearch>
      <HeaderNav>
        <a href="#catalog">Catalog</a>
        <MenuButton>Manage <Glyph d={G.down} size={36} box={16} /></MenuButton>
      </HeaderNav>
      <HeaderIcons>
        <HeaderIcon aria-label="Help"><Glyph d={G.help} /></HeaderIcon>
        <HeaderIcon aria-label="Cloud Shell"><Glyph d={G.shell} /></HeaderIcon>
        <HeaderIcon aria-label="Cost estimator"><Glyph d={G.calc} /></HeaderIcon>
        <HeaderIcon aria-label="Notifications"><Glyph d={G.bell} /><AlertDot /></HeaderIcon>
        <HeaderIcon aria-label="Account"><Glyph d={G.user} /></HeaderIcon>
      </HeaderIcons>
    </Header>
  );
}

function ObjectTable() {
  return (
    <Table>
      <colgroup>
        <Col $w="90px" /><Col $w="484px" /><Col $w="370px" /><Col $w="370px" /><Col $w="auto" /><Col $w="162px" />
      </colgroup>
      <thead>
        <tr>
          <Th><Check type="checkbox" aria-label="Select all objects" /></Th>
          <Th scope="col">Object name</Th>
          <Th scope="col"><HeadLabel>Archived <InfoIcon><Glyph d={G.info} size={36} /></InfoIcon></HeadLabel></Th>
          <Th scope="col" $right>Size</Th>
          <Th scope="col">Last modified</Th>
          <Th />
        </tr>
      </thead>
      <tbody>
        {files.map(f => (
          <tr key={f.name}>
            <Td><Check type="checkbox" aria-label={`Select ${f.name}`} /></Td>
            <Td><Link href={`#${f.name}`}>{f.name}</Link></Td>
            <Td />
            <Td $right>{f.size}</Td>
            <Td>2022-10-08 11:04 AM</Td>
            <Td><RowMenu aria-label={`Options for ${f.name}`}><Glyph d={G.kebab} size={36} /></RowMenu></Td>
          </tr>
        ))}
      </tbody>
    </Table>
  );
}

function WindowsTaskbar() {
  return (
    <Taskbar>
      <Start aria-label="Start"><WindowsLogo /></Start>
      <TaskSearch>
        <svg width="50" height="50" viewBox="0 0 50 50" fill="none" stroke="#fff" strokeWidth="3"><circle cx="32" cy="18" r="15" /><path d="M22 29 2 48" /></svg>
        <TaskSearchInput $ph="#dedede" placeholder="Type here to search" aria-label="Type here to search" />
        <Octopus />
      </TaskSearch>
      <TaskApp aria-label="Cortana"><svg width="40" height="40" viewBox="0 0 40 40" fill="none"><circle cx="20" cy="20" r="18" stroke="#a8a8a8" strokeWidth="3" /><circle cx="20" cy="20" r="15.500" stroke="#fff" strokeWidth="4" /></svg></TaskApp>
      <TaskApp aria-label="Task view"><TaskView /></TaskApp>
      <TaskApp aria-label="Edge"><Edge /></TaskApp>
      <TaskApp aria-label="File Explorer" $bar="#76b9ed"><Explorer /></TaskApp>
      <TaskApp aria-label="MyASUS"><MyAsus /></TaskApp>
      <TaskApp aria-label="Chrome" $bar="#76b9ed" $wide $bg="linear-gradient(90deg, #868686 100px, #4c4c4c 100px, #4c4c4c 102px, #717171 102px)"><Chrome /><Profile>Y</Profile></TaskApp>
      <TaskApp aria-label="Visual Studio Code" $bar="#76b9ed"><VsCode /></TaskApp>
      <TaskApp aria-label="Zoom" $bar="#ff7a00" $wide $bg="#c17b43"><Zoom /></TaskApp>
      <Tray>
        <Weather><WeatherIcon />28°C</Weather>
        <TrayIcon aria-label="Hidden icons"><Line w={26} h={16}><path d="M1 15 13 2 25 15" /></Line></TrayIcon>
        <TrayIcon aria-label="Camera"><Line w={28} h={34}><rect x="2" y="8" width="16" height="17" rx="3" /><path d="M18 14 26 9V24L18 19M4 3Q12-1 20 3M4 31Q12 35 20 31" /></Line></TrayIcon>
        <TrayIcon aria-label="OneDrive"><svg width="36" height="24" viewBox="0 0 36 24"><path d="M9 8A9.500 9.500 0 0 1 27 9L12 20Z" fill="#bdbdbd" /><path d="M7 24A8 8 0 0 1 9 8L36 20A7 7 0 0 1 29 24Z" fill="#fff" /><path d="M14 16 27 8A8 8 0 0 1 35 19Z" fill="#e6e6e6" /></svg></TrayIcon>
        <TrayIcon aria-label="Microphone"><Line w={26} h={38}><rect x="6" y="1" width="14" height="26" rx="3" fill="#fff" /><path d="M2 19V24Q2 31 13 31T24 24V19M13 31V37M7 37H19" /></Line></TrayIcon>
        <TrayIcon aria-label="Windows Update"><Line w={38} h={38}><path d="M2 5 36 1V34L2 31Z" /><path d="M12 15A8 8 0 0 1 25 14M25 9V15H19M12 28V22H18M12 22A8 8 0 0 0 18 27" /><circle cx="28" cy="29" r="8" fill="#ff9f0a" stroke="none" /></Line></TrayIcon>
        <TrayIcon aria-label="Battery"><Line w={36} h={22}><path d="M2 2H32V20H2ZM34 7V15" strokeWidth="3" /><path d="M6 5H16V17H6Z" fill="#fff" stroke="none" /></Line></TrayIcon>
        <TrayIcon aria-label="Wi-Fi"><Line w={28} h={30}><circle cx="24" cy="26" r="2" fill="#fff" /><path d="M16 28A12 12 0 0 1 27 18M9 28A20 20 0 0 1 27 11" /><path d="M2 28A27 27 0 0 1 27 3" stroke="#aaa" /></Line></TrayIcon>
        <TrayIcon aria-label="Volume"><Line w={38} h={34}><path d="M2 12H7L13 5V29L7 22H2ZM18 12Q21 17 18 22" /><path d="M23 7Q29 17 23 27M29 2Q40 17 29 32" stroke="#a5a5a5" /></Line></TrayIcon>
        <Language>ENG</Language>
        <Clock>11:04<br />08-10-2022</Clock>
        <Notifications aria-label="Notifications">
          <svg width="38" height="40" viewBox="0 0 38 40"><path d="M0 0H37V30H24V38L14 30H0Z" fill="#fff" /><path d="M7 8H30M7 15H30M7 22H22" stroke="#555" strokeWidth="2" /></svg>
          <Count>2</Count>
        </Notifications>
        <ShowDesktop aria-label="Show desktop" />
      </Tray>
    </Taskbar>
  );
}

export default function App() {
  return (
    <Screen>
      <Global />
      <BrowserChrome />
      <Viewport>
        <Page>
          <CloudHeader />
          <Body>
            <Sidebar>
              <Service><StorageIcon />Cloud Object Storage</Service>
              <SideHeading>Storage instances</SideHeading>
              <Instance>
                <InstanceSelect aria-label="Storage instance"><option>Cloud Object Storage-2p</option></InstanceSelect>
                <Glyph d={G.down} size={36} box={16} />
              </Instance>
              <SideList>
                {sideItems.map((s, i) => <li key={s}><SideLink href={`#${s}`} $active={i === 0}>{s}</SideLink></li>)}
              </SideList>
              <Collapse aria-label="Collapse navigation"><Glyph d={G.left} size={34} box={16} /></Collapse>
            </Sidebar>
            <Main>
              <TitleRow>
                <div>
                  <Crumbs>
                    <li><Link href="#storage">Storage</Link></li><li>/</li>
                    <li><Link href="#cos">Cloud Object Storage-2p</Link></li><li>/</li>
                  </Crumbs>
                  <Title>Yogesh K R</Title>
                </div>
                <PageActions>
                  <Link href="#transfers">Transfers</Link>
                  <Link href="#details">Details</Link>
                  <ActionSelect>
                    <Select aria-label="Actions"><option>Actions...</option></Select>
                    <Glyph d={G.down} size={36} box={16} />
                  </ActionSelect>
                </PageActions>
              </TitleRow>
              <Tabs role="tablist">
                <Tab role="tab" aria-selected $active>Objects</Tab>
                <Tab role="tab">Configuration</Tab>
                <Tab role="tab">Permissions</Tab>
              </Tabs>
              <Notice>If you're seeing more usage than expected, versions count towards your usage or you may have incomplete uploads <Link href="#learn">Learn more</Link></Notice>
              <Toolbar>
                <FilterBox>
                  <Glyph d={G.search} size={40} />
                  <TextInput $ph="#8d8d8d" placeholder="Prefix filter" aria-label="Prefix filter" />
                </FilterBox>
                <ToolButtons>
                  <ToolButton aria-label="Refresh"><Glyph d={G.renew} size={36} /></ToolButton>
                  <ToolButton aria-label="Aspera transfer"><MigrateIcon /></ToolButton>
                  <ToolButton aria-label="Folders"><Glyph d={G.folders} size={36} /></ToolButton>
                </ToolButtons>
                <Upload>Upload</Upload>
              </Toolbar>
              <ObjectTable />
              <DropZone>Drag and drop files (objects) here or click to upload</DropZone>
            </Main>
          </Body>
        </Page>
        <Scrollbar>
          <svg width="18" height="10" viewBox="0 0 18 10"><path d="M0 10 9 0 18 10Z" fill="#a3a3a3" /></svg>
          <Thumb />
          <svg width="18" height="10" viewBox="0 0 18 10"><path d="M0 0 9 10 18 0Z" fill="#505050" /></svg>
        </Scrollbar>
      </Viewport>
      <Feedback aria-label="Feedback"><Smile /></Feedback>
      <Shelf><ShelfItem /><ShelfItem /><ShelfItem /><ShelfItem /><ShowAll aria-label="Show all" /></Shelf>
      <WindowsTaskbar />
    </Screen>
  );
}
